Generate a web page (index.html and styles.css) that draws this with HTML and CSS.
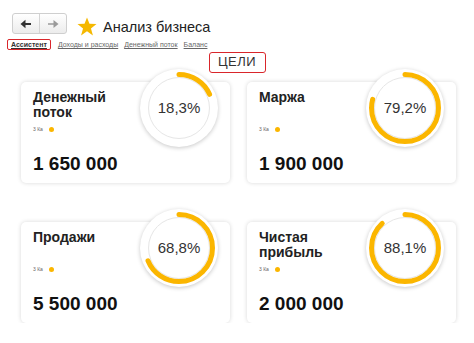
FILE: index.html
```html
<!DOCTYPE html>
<html lang="ru">

<head>
     <meta charset="UTF-8">
     <meta name="viewport" content="width=device-width, initial-scale=1.0">
     <title>Анализ бизнеса</title>
     <link rel="stylesheet" href="styles.css">
</head>

<body>

     <div class="toolbar">
          <div class="nav_box">
               <button class="nav_btn nav_back">
                    <svg width="12" height="10" viewBox="0 0 12 10">
                         <path d="M11 5H4" stroke="#333" stroke-width="2.2" />
                         <path d="M0.5 5L5.5 0.8V9.2Z" fill="#333" />
                    </svg>
               </button>
               <button class="nav_btn nav_fwd">
                    <svg width="12" height="10" viewBox="0 0 12 10">
                         <path d="M1 5H8" stroke="#9a9a9a" stroke-width="1.6" />
                         <path d="M11.5 5L6.5 1V9Z" fill="#9a9a9a" />
                    </svg>
               </button>
          </div>
          <svg class="star" width="20" height="19" viewBox="0 0 24 23">
               <polygon points="12,0.5 15,8.3 23.5,8.6 16.8,13.9 19.2,22.3 12,17.4 4.8,22.3 7.2,13.9 0.5,8.6 9,8.3" fill="#f5b800" />
          </svg>
          <h1 class="title">Анализ бизнеса</h1>
     </div>

     <div class="tabs">
          <a class="tab tab_active" href="#">Ассистент</a>
          <a class="tab" href="#">Доходы и расходы</a>
          <a class="tab" href="#">Денежный поток</a>
          <a class="tab" href="#">Баланс</a>
     </div>

     <div class="goals_row">
          <span class="goals_btn">ЦЕЛИ</span>
     </div>

     <div class="cards">
          <div class="card">
               <div class="card_title">Денежный поток</div>
               <div class="card_meta"><span>3 Ка</span><i class="dot"></i></div>
               <div class="card_value">1 650 000</div>
               <div class="gauge">
                    <svg width="78" height="78" viewBox="0 0 78 78">
                         <circle cx="39" cy="39" r="30.5" fill="none" stroke="#e6e6e6" stroke-width="1" />
                         <circle class="gauge_arc" cx="39" cy="39" r="33.5" pathLength="100" stroke-dasharray="18.3 100" />
                    </svg>
                    <span class="gauge_text">18,3%</span>
               </div>
          </div>
          <div class="card">
               <div class="card_title">Маржа</div>
               <div class="card_meta"><span>3 Ка</span><i class="dot"></i></div>
               <div class="card_value">1 900 000</div>
               <div class="gauge">
                    <svg width="78" height="78" viewBox="0 0 78 78">
                         <circle cx="39" cy="39" r="30.5" fill="none" stroke="#e6e6e6" stroke-width="1" />
                         <circle class="gauge_arc" cx="39" cy="39" r="33.5" pathLength="100" stroke-dasharray="79.2 100" />
                    </svg>
                    <span class="gauge_text">79,2%</span>
               </div>
          </div>
          <div class="card">
               <div class="card_title">Продажи</div>
               <div class="card_meta"><span>3 Ка</span><i class="dot"></i></div>
               <div class="card_value">5 500 000</div>
               <div class="gauge">
                    <svg width="78" height="78" viewBox="0 0 78 78">
                         <circle cx="39" cy="39" r="30.5" fill="none" stroke="#e6e6e6" stroke-width="1" />
                         <circle class="gauge_arc" cx="39" cy="39" r="33.5" pathLength="100" stroke-dasharray="68.8 100" />
                    </svg>
                    <span class="gauge_text">68,8%</span>
               </div>
          </div>
          <div class="card">
               <div class="card_title">Чистая прибыль</div>
               <div class="card_meta"><span>3 Ка</span><i class="dot"></i></div>
               <div class="card_value">2 000 000</div>
               <div class="gauge">
                    <svg width="78" height="78" viewBox="0 0 78 78">
                         <circle cx="39" cy="39" r="30.5" fill="none" stroke="#e6e6e6" stroke-width="1" />
                         <circle class="gauge_arc" cx="39" cy="39" r="33.5" pathLength="100" stroke-dasharray="88.1 100" />
                    </svg>
                    <span class="gauge_text">88,1%</span>
               </div>
          </div>
     </div>

</body>

</html>
```

FILE: styles.css
```css
body {
     margin: 0;
     background: #fff;
     font-family: "Liberation Sans", Arial, sans-serif;
     color: #222;
}

.toolbar {
     display: flex;
     align-items: center;
     padding: 13px 0 0 12px;
     height: 21px;
}

.nav_box {
     display: flex;
     width: 55px;
     height: 21px;
     box-sizing: border-box;
     border: 1px solid #cfcfcf;
     border-radius: 3px;
     background: linear-gradient(#ffffff, #ececec);
     overflow: hidden;
}

.nav_btn {
     flex: 1;
     display: flex;
     align-items: center;
     justify-content: center;
     padding: 0;
     border: 0;
     background: transparent;
}

.nav_back {
     border-right: 1px solid #d4d4d4;
}

.star {
     margin: 6px 0 0 10px;
}

.title {
     margin: 6px 0 0 6px;
     font-size: 14.5px;
     font-weight: normal;
     color: #222;
}

.tabs {
     display: flex;
     align-items: center;
     gap: 6px;
     padding: 4px 0 0 7px;
     height: 13px;
}

.tab {
     font-size: 7px;
     color: #666;
     text-decoration: underline;
}

.tab_active {
     font-weight: bold;
     color: #333;
     border: 1.5px solid #d9262b;
     border-radius: 2px;
     padding: 1px 3px;
     margin-right: 1px;
}

.goals_row {
     display: flex;
     justify-content: center;
     padding-top: 1px;
}

.goals_btn {
     display: block;
     width: 57px;
     height: 21px;
     box-sizing: border-box;
     border: 1.5px solid #d9262b;
     border-radius: 3px;
     text-align: center;
     line-height: 18px;
     font-size: 13px;
     letter-spacing: 0.5px;
     color: #333;
}

.cards {
     display: grid;
     grid-template-columns: 209px 209px;
     column-gap: 17px;
     row-gap: 39px;
     padding: 9px 0 0 21px;
}

.card {
     position: relative;
     display: flex;
     flex-direction: column;
     height: 101px;
     box-sizing: border-box;
     padding: 8px 12px 8px 12px;
     border-radius: 5px;
     background: #fff;
     box-shadow: 0 0 4px rgba(0, 0, 0, 0.16);
}

.card_title {
     width: 90px;
     height: 32px;
     font-size: 14px;
     line-height: 15px;
     font-weight: bold;
     color: #222;
}

.card_meta {
     display: flex;
     align-items: center;
     margin-top: 4px;
     height: 6px;
     font-size: 5px;
     color: #666;
}

.dot {
     width: 5px;
     height: 5px;
     margin-left: 6px;
     border-radius: 50%;
     background: #fbb600;
}

.card_value {
     margin-top: auto;
     font-size: 19px;
     line-height: 22px;
     font-weight: bold;
     color: #111;
}

.gauge {
     position: absolute;
     top: -13px;
     right: 12px;
     width: 78px;
     height: 78px;
     border-radius: 50%;
     background: #fff;
     box-shadow: 0 1px 4px rgba(0, 0, 0, 0.22);
}

.gauge svg {
     display: block;
     transform: rotate(-90deg);
}

.gauge_arc {
     fill: none;
     stroke: #fbb600;
     stroke-width: 5;
     stroke-linecap: round;
}

.gauge_text {
     position: absolute;
     left: 0;
     right: 0;
     top: 30px;
     text-align: center;
     font-size: 15px;
     line-height: 18px;
     color: #333;
}
```
